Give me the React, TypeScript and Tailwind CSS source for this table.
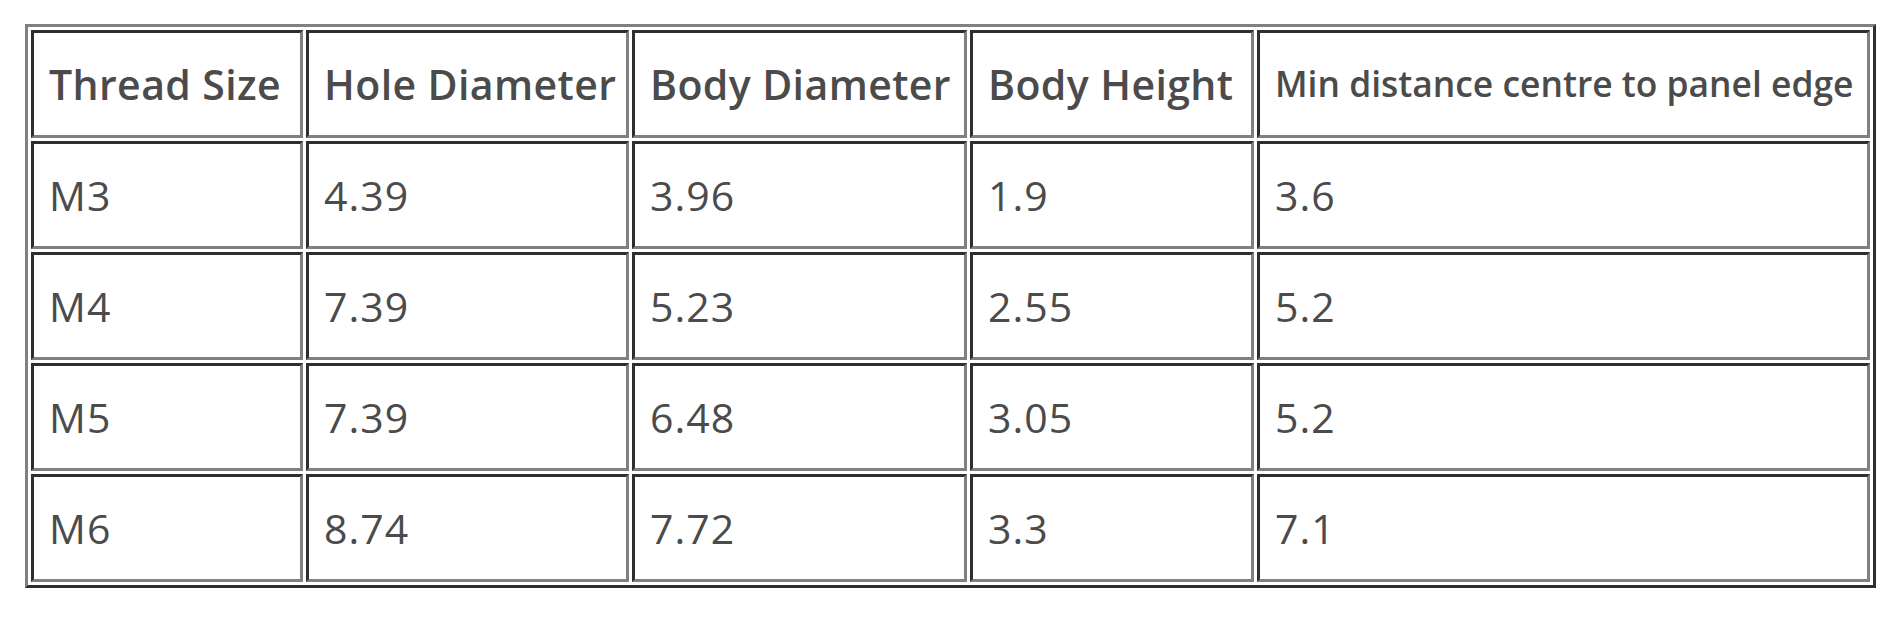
import React from "react";

const headers = ["Thread Size", "Hole Diameter", "Body Diameter", "Body Height"];
const rows = [
  ["M3", "4.39", "3.96", "1.9", "3.6"],
  ["M4", "7.39", "5.23", "2.55", "5.2"],
  ["M5", "7.39", "6.48", "3.05", "5.2"],
  ["M6", "8.74", "7.72", "3.3", "7.1"],
];

const widths = ["w-[272px]", "w-[323px]", "w-[335px]", "w-[284px]", "w-[613px]"];

const cell =
  "h-[108px] border-[3px] border-solid border-t-[#2e2e2e] border-l-[#2e2e2e] border-r-[#808080] border-b-[#808080] pl-[15px] pr-[4px] align-middle text-left whitespace-nowrap";

export default function App() {
  return (
    <div className="bg-white w-[1900px] h-[624px] pt-[24px] pl-[25px]" style={{ fontFamily: "'Open Sans', 'Noto Sans', sans-serif" }}>
      <table className="table-fixed w-[1851px] border-separate border-spacing-[3px] border-[3px] border-solid border-t-[#808080] border-l-[#808080] border-r-[#2e2e2e] border-b-[#2e2e2e] text-[#4b4b4b]">
        <thead>
          <tr>
            {headers.map((h, i) => (
              <th key={h} className={`${cell} ${widths[i]} text-[41px] font-semibold leading-none tracking-[0.4px]`}>
                {h}
              </th>
            ))}
            <th className={`${cell} ${widths[4]} text-[35.4px] font-semibold leading-none`}>
              Min distance centre to panel edge
            </th>
          </tr>
        </thead>
        <tbody>
          {rows.map((r) => (
            <tr key={r[0]}>
              {r.map((v, i) => (
                <td key={i} className={`${cell} text-[41px] font-normal leading-none tracking-[1px]`}>
                  {v}
                </td>
              ))}
            </tr>
          ))}
        </tbody>
      </table>
    </div>
  );
}
